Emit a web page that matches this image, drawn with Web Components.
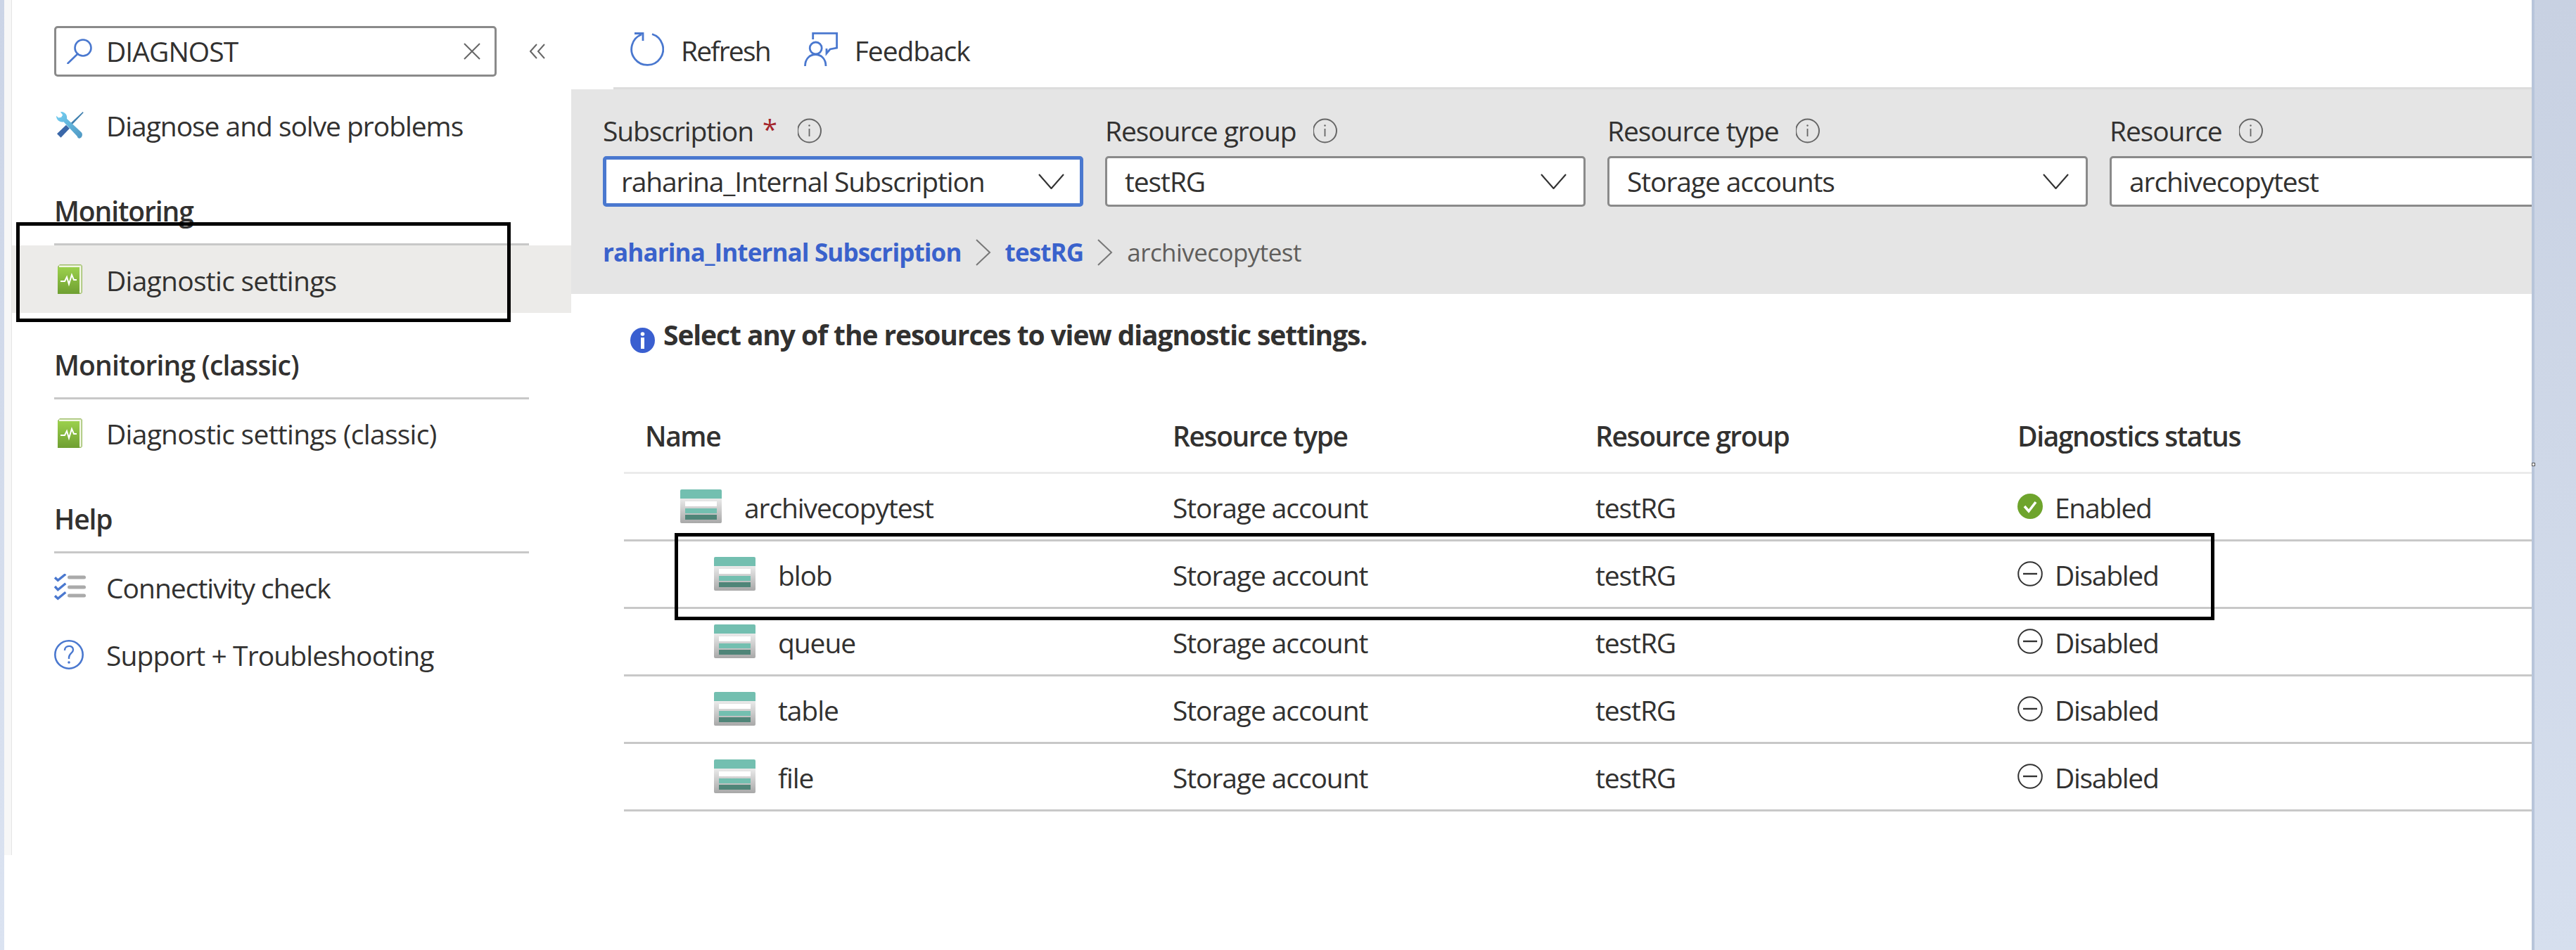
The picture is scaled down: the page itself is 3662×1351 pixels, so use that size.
<!DOCTYPE html>
<html>
<head>
<meta charset="utf-8">
<title>Diagnostic settings</title>
<style>
  html, body { margin: 0; height: 100%; background: #fff; overflow: hidden; }
  body { font: 39px/1.2 "Open Sans", "Liberation Sans", sans-serif; letter-spacing: -1.1px; color: #323130; }
</style>
</head>
<body>
<portal-page>
  <blade-menu slot="menu">
    <menu-item style="letter-spacing:-1.05px"><az-icon slot="icon" name="tools" style="margin-left:3px"></az-icon>Diagnose and solve problems</menu-item>
    <menu-section>Monitoring</menu-section>
    <menu-item selected style="letter-spacing:-.73px"><az-icon slot="icon" name="book" style="margin-left:5px"></az-icon>Diagnostic settings</menu-item>
    <menu-section style="letter-spacing:-.85px">Monitoring (classic)</menu-section>
    <menu-item style="letter-spacing:-.72px"><az-icon slot="icon" name="book" style="margin-left:5px"></az-icon>Diagnostic settings (classic)</menu-item>
    <menu-section>Help</menu-section>
    <menu-item style="letter-spacing:-1px"><az-icon slot="icon" name="checks"></az-icon>Connectivity check</menu-item>
    <menu-item style="letter-spacing:-.88px"><az-icon slot="icon" name="help"></az-icon>Support + Troubleshooting</menu-item>
  </blade-menu>

  <tool-bar slot="main">
    <tool-button style="letter-spacing:-1.8px"><az-icon slot="icon" name="refresh"></az-icon>Refresh</tool-button>
    <tool-button><az-icon slot="icon" name="feedback"></az-icon>Feedback</tool-button>
  </tool-bar>

  <filter-panel slot="main">
    <filter-select label="Subscription" required focused value="raharina_Internal Subscription"></filter-select>
    <filter-select label="Resource group" value="testRG"></filter-select>
    <filter-select label="Resource type" value="Storage accounts"></filter-select>
    <filter-select label="Resource" value="archivecopytest"></filter-select>
    <bread-crumbs slot="crumbs">
      <a>raharina_Internal Subscription</a><az-icon name="crumb"></az-icon>
      <a>testRG</a><az-icon name="crumb"></az-icon>
      <span>archivecopytest</span>
    </bread-crumbs>
  </filter-panel>

  <info-line slot="main">Select any of the resources to view diagnostic settings.</info-line>

  <resource-table slot="main">
    <resource-row type="Storage account" group="testRG" status="enabled">archivecopytest</resource-row>
    <resource-row child type="Storage account" group="testRG" status="disabled">blob</resource-row>
    <resource-row child type="Storage account" group="testRG" status="disabled">queue</resource-row>
    <resource-row child type="Storage account" group="testRG" status="disabled">table</resource-row>
    <resource-row child type="Storage account" group="testRG" status="disabled">file</resource-row>
  </resource-table>

  <note-box slot="over" style="left:23px;top:316px;width:703px;height:142px"></note-box>
  <note-box slot="over" style="left:959px;top:758px;width:2189px;height:124px"></note-box>
</portal-page>

<script>
  'use strict';
  {
    const ICONS = {
      search: [36, 36, `<g fill="none" stroke="#4a78cf" stroke-width="2.6"><circle cx="23" cy="13" r="11.5"/><path d="M15.5 21.5 1.5 35" stroke-linecap="round"/></g>`],
      close: [24, 24, `<path d="M1 1l22 22M23 1 1 23" fill="none" stroke="#666" stroke-width="2"/>`],
      collapse: [22, 22, `<path d="M10 1 1 11l9 10M21 1l-9 10 9 10" fill="none" stroke="#666" stroke-width="2"/>`],
      tools: [39, 39, `<defs><linearGradient id="w" x1="0" y1="0" x2="1" y2="1"><stop offset="0" stop-color="#74d0f3"/><stop offset="1" stop-color="#4f97c2"/></linearGradient></defs>
        <g transform="scale(.325)"><path d="M116 0 119 4 62 64 56 56Z" fill="#3f7fae"/><path d="M43 58 58 73 20 113 3 96Z" fill="#3a67a8"/>
        <path d="M18 0 28 14 22 24 10 26 0 18C0 35 15 48 32 44L92 108C92 112 96 116 100 116 112 116 118 98 110 90L46 30C50 14 36-2 18 0Z" fill="url(#w)"/></g>`],
      book: [35, 42, `<defs><linearGradient id="b" x1="0" y1="0" x2="0" y2="1"><stop offset="0" stop-color="#9bd04c"/><stop offset="1" stop-color="#6f9f32"/></linearGradient></defs>
        <path d="M3 0H33L35 2V40L33 42H0V3Z" fill="#9fbf6a"/><path d="M2 1.5H33.5V40.5H2Z" fill="#f2f7e4"/><path d="M0 4H31V42H0Z" fill="url(#b)"/>
        <path d="M4 24H10L13 18 16 28 20 15 23 22H27" fill="none" stroke="#fff" stroke-width="2"/>`],
      checks: [45, 38, `<g fill="none" stroke="#4a78cf" stroke-width="3.4"><path d="M1 5.3 5.3 9.3 16.3.5M1 18 5.3 22.7 16.3 13.7M1 31.3 5.3 35.3 16.3 26.3"/></g>
        <g fill="#aaa"><rect x="19" y="2.5" width="26" height="5" rx="2.5"/><rect x="19" y="16.5" width="26" height="5" rx="2.5"/><rect x="19" y="28.5" width="26" height="5" rx="2.5"/></g>`],
      help: [42, 42, `<circle cx="21" cy="21" r="19.7" fill="none" stroke="#4a78cf" stroke-width="2.6"/>
        <path d="M15 15c0-8 12-8 12-1 0 5-6 5-6 11v2" fill="none" stroke="#4a78cf" stroke-width="2.4"/><circle cx="21" cy="32" r="1.8" fill="#4a78cf"/>`],
      refresh: [48, 48, `<g fill="none" stroke="#4a78cf" stroke-width="2.8"><path d="M31 2.5A22.5 22.5 0 1 1 16 3"/><path d="M6 1.5H18V12"/></g>`],
      feedback: [48, 48, `<g fill="none" stroke="#4a78cf" stroke-width="2.8"><path d="M12.7 10V1.4H46.6V22L37 24 32 30V23"/><circle cx="16.7" cy="22.5" r="8.5"/><path d="M1.5 48C1.5 26 31 26 31 48"/></g>`],
      info: [36, 36, `<circle cx="16.5" cy="18" r="16.5" fill="none" stroke="#666" stroke-width="2"/><path d="M16.5 15v11" stroke="#666" stroke-width="1.8"/><circle cx="16.5" cy="10.5" r="1.2" fill="#666"/>`],
      chevron: [37, 22, `<path d="M1 1 18.5 21 36 1" fill="none" stroke="#333" stroke-width="2.2"/>`],
      crumb: [22, 38, `<path d="M1 1 20 19 1 37" fill="none" stroke="#777" stroke-width="2"/>`],
      storage: [59, 48, `<defs><linearGradient id="s" x1="0" y1="0" x2="0" y2="1"><stop offset="0" stop-color="#ececec"/><stop offset="1" stop-color="#a8a8a8"/></linearGradient></defs>
        <path d="M0 12H59V46a2 2 0 0 1-2 2H2a2 2 0 0 1-2-2Z" fill="url(#s)"/><path d="M2 0H57a2 2 0 0 1 2 2V13H0V2a2 2 0 0 1 2-2Z" fill="#73bfb0"/>
        <rect x="7" y="17" width="45" height="7" fill="#fff"/><rect x="7" y="27" width="45" height="7" fill="#73bfb0"/><rect x="7" y="36" width="45" height="7" fill="#4f8578"/>`],
      note: [35, 36, `<ellipse cx="17.5" cy="18" rx="17.5" ry="18" fill="#3a5fd0"/><circle cx="17.5" cy="9" r="2.8" fill="#fff"/><rect x="15" y="14" width="5" height="16" fill="#fff"/>`],
      enabled: [36, 36, `<circle cx="18" cy="18" r="18" fill="#6ea42c"/><path d="M10 18l6 7 10-13" fill="none" stroke="#fff" stroke-width="3.6"/>`],
      disabled: [36, 36, `<circle cx="18" cy="18" r="16.8" fill="none" stroke="#333" stroke-width="2"/><path d="M8 18H28" stroke="#333" stroke-width="2.4"/>`]
    };

    class AzIcon extends HTMLElement {
      connectedCallback() {
        const [w, h, body] = ICONS[this.getAttribute('name')];
        this.attachShadow({mode: 'open'}).innerHTML = `
          <style>:host { display: block; flex: none; width: ${w}px; height: ${h}px; } svg { display: block; }</style>
          <svg width="${w}" height="${h}" viewBox="0 0 ${w} ${h}">${body}</svg>`;
      }
    }
    customElements.define('az-icon', AzIcon);

    class PortalPage extends HTMLElement {
      constructor() {
        super();
        this.attachShadow({mode: 'open'}).innerHTML = `
          <style>
            :host { display: flex; position: relative; height: 1351px; width: 3662px; overflow: hidden; }
            .edge { flex: none; width: 6px; background: linear-gradient(#cbd4e6, #dbe3f1); }
            .menu { flex: none; width: 806px; }
            .main { flex: none; width: 2787px; overflow: hidden; }
            .right { flex: none; width: 63px; box-sizing: border-box; border-left: 4px solid #b8c5da; background: linear-gradient(#c8d1e2, #d6dfee); }
            /* little resize grip that sits on the pane edge */
            .grip { position: absolute; left: 3599px; top: 658px; width: 5px; height: 5px; box-sizing: border-box; background: #fff; border: 1px solid #555; }
          </style>
          <div class="edge"></div>
          <div class="menu"><slot name="menu"></slot></div>
          <div class="main"><slot name="main"></slot></div>
          <div class="right"></div>
          <div class="grip"></div>
          <slot name="over"></slot>`;
      }
    }
    customElements.define('portal-page', PortalPage);

    class NoteBox extends HTMLElement {
      constructor() {
        super();
        this.attachShadow({mode: 'open'}).innerHTML = `
          <style>:host { position: absolute; box-sizing: border-box; border: 5px solid #000; }</style>`;
      }
    }
    customElements.define('note-box', NoteBox);

    class BladeMenu extends HTMLElement {
      constructor() {
        super();
        this.attachShadow({mode: 'open'}).innerHTML = `
          <style>
            :host { display: flex; height: 100%; }
            .rail { flex: none; width: 11px; height: 1216px; box-sizing: border-box; background: #f7f7f7; border-right: 1px solid #e4e4e4; }
            .col { flex: 1; min-width: 0; }
            .top { display: flex; align-items: center; padding: 37px 0 21px 60px; }
            .search { box-sizing: border-box; width: 629px; height: 72px; display: flex; align-items: center; padding: 0 20px 0 15px;
                      border: 3px solid #8a8a8a; border-radius: 5px; }
            .search span { flex: 1; margin-left: 20px; letter-spacing: -.95px; }
            .collapse { margin-left: 47px; }
          </style>
          <div class="rail"></div>
          <div class="col">
            <div class="top">
              <div class="search"><az-icon name="search"></az-icon><span>DIAGNOST</span><az-icon name="close"></az-icon></div>
              <az-icon class="collapse" name="collapse"></az-icon>
            </div>
            <slot></slot>
          </div>`;
      }
    }
    customElements.define('blade-menu', BladeMenu);

    class MenuItem extends HTMLElement {
      constructor() {
        super();
        this.attachShadow({mode: 'open'}).innerHTML = `
          <style>
            :host { display: flex; align-items: center; height: 96px; padding-left: 60px; }
            :host([selected]) { background: #ecebe9; }
            .ic { flex: none; width: 76px; margin-right: -2px; display: flex; }
            .tx { padding-top: 2px; }
            :host([selected]) .tx { padding-top: 4px; }
          </style>
          <div class="ic"><slot name="icon"></slot></div><div class="tx"><slot></slot></div>`;
      }
    }
    customElements.define('menu-item', MenuItem);

    class MenuSection extends HTMLElement {
      constructor() {
        super();
        this.attachShadow({mode: 'open'}).innerHTML = `
          <style>
            :host { display: flex; align-items: flex-end; box-sizing: border-box; height: 123px; margin: 0 60px; padding-bottom: 22px;
                    border-bottom: 3px solid #c8c8c8; font-weight: 600; }
          </style>
          <slot></slot>`;
      }
    }
    customElements.define('menu-section', MenuSection);

    class ToolBar extends HTMLElement {
      constructor() {
        super();
        this.attachShadow({mode: 'open'}).innerHTML = `
          <style>
            :host { display: flex; align-items: center; gap: 48px; height: 127px; box-sizing: border-box; padding: 16px 0 0 24px;
                    margin-left: 60px; border-bottom: 3px solid #dcdcdc; }
          </style>
          <slot></slot>`;
      }
    }
    customElements.define('tool-bar', ToolBar);

    class ToolButton extends HTMLElement {
      constructor() {
        super();
        this.attachShadow({mode: 'open'}).innerHTML = `
          <style>
            :host { display: flex; align-items: center; gap: 24px; }
            .tx { padding-top: 4px; }
          </style>
          <slot name="icon"></slot><div class="tx"><slot></slot></div>`;
      }
    }
    customElements.define('tool-button', ToolButton);

    class FilterPanel extends HTMLElement {
      constructor() {
        super();
        this.attachShadow({mode: 'open'}).innerHTML = `
          <style>
            :host { display: block; box-sizing: border-box; height: 291px; background: #e5e5e5; padding: 34px 0 0 45px; }
            .row { display: grid; grid-template-columns: repeat(4, 683px); column-gap: 31px; }
            .crumbs { margin-top: 46px; }
          </style>
          <div class="row"><slot></slot></div>
          <div class="crumbs"><slot name="crumbs"></slot></div>`;
      }
    }
    customElements.define('filter-panel', FilterPanel);

    class FilterSelect extends HTMLElement {
      connectedCallback() {
        const label = this.getAttribute('label');
        const value = this.getAttribute('value');
        const star = this.hasAttribute('required') ? '<b>*</b>' : '';
        this.attachShadow({mode: 'open'}).innerHTML = `
          <style>
            :host { display: block; min-width: 0; }
            .lab { display: flex; align-items: center; height: 61px; padding-bottom: 11px; box-sizing: border-box; }
            b { color: #a4262c; font-weight: 400; font-size: 38px; line-height: 30px; margin: -6px 6px 0 13px; }
            .lab az-icon { margin-left: 24px; }
            .box { box-sizing: border-box; height: 72px; display: flex; align-items: center; justify-content: space-between;
                   padding: 0 24px 0 25px; background: #fff; border: 3px solid #8a8a8a; border-radius: 5px; }
            :host([focused]) .box { border: 5px solid #4a78cf; padding: 0 22px 0 21px; letter-spacing: -1.15px; }
          </style>
          <div class="lab"><span>${label}</span>${star}<az-icon name="info"></az-icon></div>
          <div class="box"><span>${value}</span><az-icon name="chevron"></az-icon></div>`;
      }
    }
    customElements.define('filter-select', FilterSelect);

    class BreadCrumbs extends HTMLElement {
      constructor() {
        super();
        this.attachShadow({mode: 'open'}).innerHTML = `
          <style>
            :host { display: flex; align-items: center; gap: 20px; height: 38px; font-size: 35px; }
            ::slotted(a) { color: #3a62cc; font-weight: 700; letter-spacing: -.87px; }
            ::slotted(span) { color: #605e5c; letter-spacing: -.56px; }
          </style>
          <slot></slot>`;
      }
    }
    customElements.define('bread-crumbs', BreadCrumbs);

    class InfoLine extends HTMLElement {
      constructor() {
        super();
        this.attachShadow({mode: 'open'}).innerHTML = `
          <style>
            :host { display: flex; align-items: flex-start; height: 156px; box-sizing: border-box; padding: 35px 0 0 84px; font-weight: 700; }
            az-icon { margin: 13px 12px 0 0; }
          </style>
          <az-icon name="note"></az-icon><slot></slot>`;
      }
    }
    customElements.define('info-line', InfoLine);

    class ResourceTable extends HTMLElement {
      constructor() {
        super();
        this.attachShadow({mode: 'open'}).innerHTML = `
          <style>
            :host { display: block; margin-left: 75px; }
            .head { display: grid; grid-template-columns: 780px 601px 600px 1fr; box-sizing: border-box; height: 100px; padding-top: 23px;
                    border-bottom: 3px solid #ebebeb; font-weight: 600; letter-spacing: -1.4px; }
            .head div:first-child { padding-left: 30px; }
          </style>
          <div class="head"><div>Name</div><div>Resource type</div><div>Resource group</div><div>Diagnostics status</div></div>
          <slot></slot>`;
      }
    }
    customElements.define('resource-table', ResourceTable);

    class ResourceRow extends HTMLElement {
      connectedCallback() {
        const status = this.getAttribute('status');
        const label = status === 'enabled' ? 'Enabled' : 'Disabled';
        this.attachShadow({mode: 'open'}).innerHTML = `
          <style>
            :host { display: grid; grid-template-columns: 780px 601px 600px 1fr; align-items: center; box-sizing: border-box; height: 96px;
                    border-bottom: 3px solid #c8c8c8; }
            .name { display: flex; align-items: center; gap: 32px; padding-left: 80px; }
            :host([child]) .name { padding-left: 128px; }
            .st { display: flex; align-items: center; gap: 17px; }
            .tx { padding-top: 4px; }
            .st .tx { letter-spacing: -1.3px; }
          </style>
          <div class="name"><az-icon name="storage"></az-icon><span class="tx"><slot></slot></span></div>
          <div class="tx">${this.getAttribute('type')}</div>
          <div class="tx">${this.getAttribute('group')}</div>
          <div class="st"><az-icon name="${status}"></az-icon><span class="tx">${label}</span></div>`;
      }
    }
    customElements.define('resource-row', ResourceRow);
  }
</script>
</body>
</html>
